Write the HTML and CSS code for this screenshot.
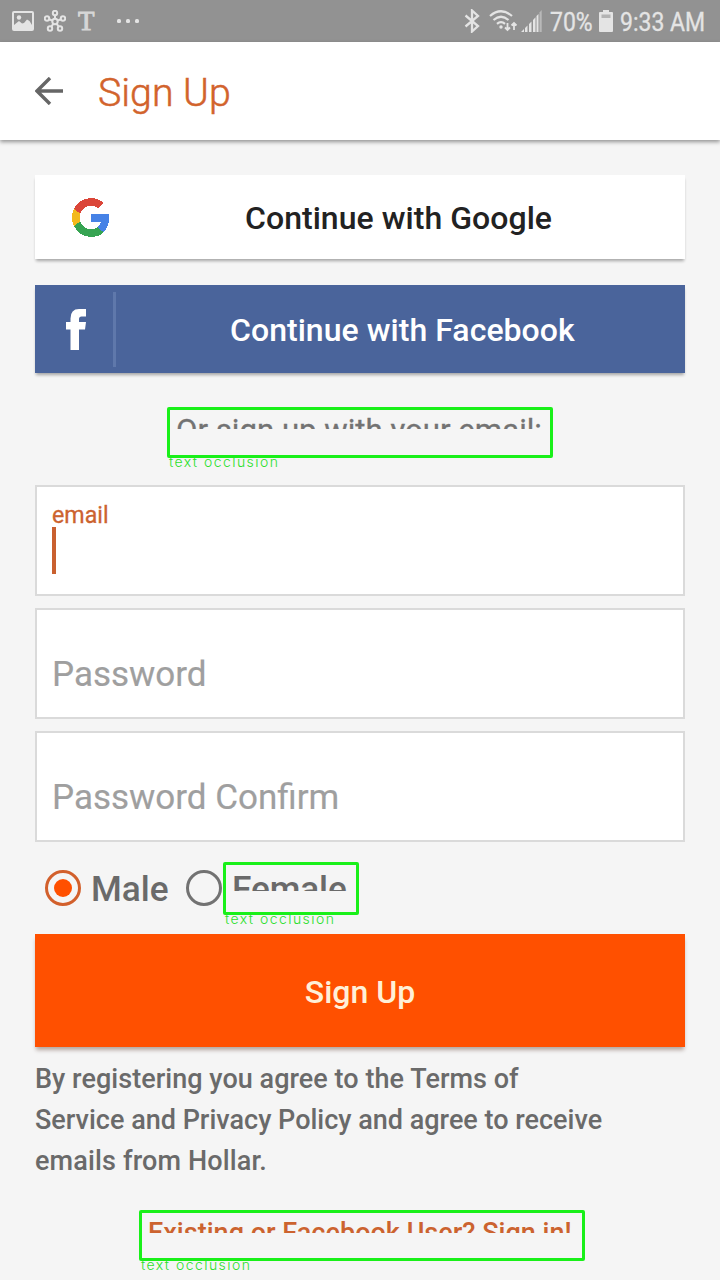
FILE: index.html
```html
<!DOCTYPE html>
<html lang="en">
<head>
<meta charset="utf-8">
<title>Sign Up</title>
<link rel="stylesheet" href="styles.css">
</head>
<body>
<div class="screen">
  <div class="status">
    <svg class="st-picture" width="22" height="20" viewBox="0 0 22 20"><rect x="1" y="1" width="20" height="18" rx="1" fill="none" stroke="#e4e4e4" stroke-width="2"/><circle cx="7" cy="6.500" r="2.200" fill="#e4e4e4"/><path d="M2 18v-4l5-4 3 2.500 2-.5 3-3.500 2.500 1.500L20 14v4z" fill="#e4e4e4"/></svg>
    <svg class="st-hub" width="22" height="22" viewBox="0 0 22 22" fill="none" stroke="#e4e4e4" stroke-width="2"><circle cx="11" cy="11.500" r="2.700"/><circle cx="11" cy="3" r="2.200"/><circle cx="3" cy="8.500" r="2.200"/><circle cx="19" cy="8.500" r="2.200"/><circle cx="6" cy="18.500" r="2.200"/><circle cx="16" cy="18.500" r="2.200"/><path d="M11 5.300v3.500M5.200 9.300l3.200 1.300M16.800 9.300l-3.200 1.300M7.300 16.600l2-2.800M14.700 16.600l-2-2.800"/></svg>
    <span class="st-t">T</span>
    <span class="st-dots"><i></i><i></i><i></i></span>
    <div class="st-right">
      <svg width="16" height="24" viewBox="0 0 16 24" fill="none" stroke="#e4e4e4" stroke-width="2.300"><path d="M1.500 6.500L14 17l-6 5.500v-21L14 7 1.500 17.500"/></svg>
      <svg class="st-wifi" width="29" height="22" viewBox="0 0 29 22" fill="none" stroke="#e4e4e4" stroke-width="2.200"><path d="M1 6q11-9.500 22 0M4.500 10q7.500-6.500 15 0M8 13.800q4-3.500 8 0"/><circle cx="12" cy="17" r="1.700" fill="#e4e4e4" stroke="none"/><path d="M18.500 13v7M16 17.500l2.500 2.500 2.500-2.500M25 20v-7M22.500 15.500l2.500-2.500 2.500 2.500" stroke-width="1.800"/></svg>
      <svg class="st-signal" width="21" height="22" viewBox="0 0 21 22" fill="#e4e4e4"><path d="M0 22l3-3v3zM4 22v-4l2.500-2.500V22zM8 22v-8l2.500-2.500V22zM12 22V10l2.500-2.700V22z"/><path d="M15.500 22V6L17.500 4v18z"/><path d="M18.500 22V2.500L20.700 0v22z" fill="#b9b9b9"/></svg>
      <span class="st-text st-pct">70%</span>
      <svg class="st-batt" width="14" height="22" viewBox="0 0 14 22"><path d="M4 0h6v2h3q1 0 1 1v18q0 1-1 1H1q-1 0-1-1V3q0-1 1-1h3z" fill="#e4e4e4"/><path d="M2.500 4.500h9V8h-9z" fill="#b3b3b3"/></svg>
      <span class="st-text st-time">9:33 AM</span>
    </div>
  </div>

  <header class="bar">
    <svg width="28" height="28" viewBox="0 0 28 28" fill="none" stroke="#666" stroke-width="3.400"><path d="M28 14H2.500M15 1L2 14l13 13"/></svg>
    <h1 class="title">Sign Up</h1>
  </header>

  <main class="content">
    <button class="btn google">
      <svg class="g-logo" width="38" height="39" viewBox="0 0 48 48" preserveAspectRatio="none" shape-rendering="crispEdges"><path fill="#db4639" d="M24 9.500c3.540 0 6.710 1.220 9.210 3.600l6.850-6.850C35.900 2.380 30.470 0 24 0 14.620 0 6.510 5.380 2.560 13.220l7.980 6.190C12.430 13.720 17.740 9.500 24 9.500z"/><path fill="#4682e6" d="M46.980 24.550c0-1.570-.15-3.090-.38-4.550H24v9.020h12.940c-.58 2.960-2.260 5.480-4.780 7.180l7.730 6c4.510-4.180 7.090-10.360 7.090-17.650z"/><path fill="#f3b91b" d="M10.530 28.590c-.48-1.450-.76-2.990-.76-4.590s.27-3.140.76-4.590l-7.980-6.190C.92 16.460 0 20.120 0 24c0 3.880.92 7.540 2.560 10.780l7.970-6.190z"/><path fill="#36a452" d="M24 48c6.480 0 11.930-2.130 15.890-5.810l-7.730-6c-2.150 1.450-4.920 2.300-8.160 2.300-6.260 0-11.570-4.220-13.470-9.910l-7.980 6.190C6.510 42.620 14.620 48 24 48z"/></svg>
      <span class="g-label">Continue with Google</span>
    </button>
    <button class="btn facebook">
      <svg class="f-logo" width="20" height="41" viewBox="0 0 20 41"><path fill="#fff" d="M4.500 41V20.500H0V13h4.500V9.500Q4.500 0 13 0h7v7.500h-4.500q-2.500 0-2.500 2.500v3h7l-1 7.500h-6V41z"/></svg>
      <span class="f-rule"></span>
      <span class="f-label">Continue with Facebook</span>
    </button>

    <div class="marked or"><span class="clip"><span>Or sign up with your email:</span></span><span class="tag">text occlusion</span></div>

    <div class="fields">
      <div class="field focused"><span class="hint">email</span><span class="caret"></span></div>
      <div class="field"><span class="placeholder">Password</span></div>
      <div class="field"><span class="placeholder">Password Confirm</span></div>
    </div>

    <div class="genders">
      <span class="radio on"></span><span class="male">Male</span>
      <span class="radio"></span>
      <div class="marked female"><span class="clip"><span>Female</span></span><span class="tag">text occlusion</span></div>
    </div>

    <button class="btn submit"><span>Sign Up</span></button>

    <p class="terms"><span class="first">By registering you agree to the Terms of</span><br>Service and Privacy Policy and agree to receive<br><span class="last">emails from Hollar.</span></p>

    <div class="marked existing"><span class="clip"><span>Existing or Facebook User? Sign in!</span></span><span class="tag">text occlusion</span></div>
  </main>
</div>
</body>
</html>
```
FILE: styles.css
```css
* { box-sizing: border-box; }
body { margin: 0; background: #f5f5f5; font-family: Roboto, "Liberation Sans", sans-serif; }
svg { display: block; flex: none; }
.screen { width: 720px; height: 1280px; overflow: hidden; background: #f5f5f5; }

.status { height: 42px; background: #929292; display: flex; align-items: center; padding-left: 12px; color: #e4e4e4; }
.st-hub { margin-left: 10px; }
.st-t { margin-left: 12px; width: 18px; font: 27px/44px "Liberation Serif", serif; color: #d6d6d6; -webkit-text-stroke: 1px #d6d6d6; }
.st-dots { display: flex; gap: 5px; margin-left: 21px; }
.st-dots i { width: 4px; height: 4px; border-radius: 1.5px; background: #e4e4e4; }
.st-right { margin-left: auto; display: flex; align-items: center; height: 42px; }
.st-wifi { margin-left: 9px; }
.st-signal { margin-left: 3px; }
.st-text { font-size: 26px; line-height: 40px; margin-top: 2px; white-space: nowrap; transform-origin: 0 50%; transform: scaleX(.885); -webkit-text-stroke: .3px #e4e4e4; }
.st-pct { margin-left: 8px; width: 43px; }
.st-batt { margin-left: 6px; }
.st-time { margin-left: 7px; width: 100px; }

.bar { height: 98px; background: #fff; display: flex; align-items: center; padding-left: 35px; box-shadow: 0 2px 4px rgba(0,0,0,.4); position: relative; }
.title { margin: 3px 0 0 35px; font-size: 39.3px; line-height: 48px; font-weight: 300; color: #d2632c; -webkit-text-stroke: .5px #d2632c; }

.content { padding: 35px 35px 0; display: flex; flex-direction: column; }
.btn { border: 0; padding: 0; margin: 0; font: 500 32px/40px Roboto, "Liberation Sans", sans-serif; display: flex; align-items: center; white-space: nowrap; box-shadow: 0 3px 3px -1px rgba(0,0,0,.33); border-radius: 0; }
.google { height: 84px; background: #fff; color: #222; }
.g-logo { margin-left: 37px; }
.g-label { margin-left: 135px; margin-top: 1px; letter-spacing: .04px; }
.facebook { height: 88px; margin-top: 26px; background: #4a649b; color: #fff; }
.f-logo { margin-left: 31px; }
.f-rule { width: 3px; height: 75px; margin-left: 27px; background: #5f78ab; }
.f-label { margin-left: 114px; margin-top: 1px; letter-spacing: .04px; }

.marked { border: 3px solid #19f019; border-radius: 2px; position: relative; z-index: 0; white-space: nowrap; }
.clip { display: block; overflow: hidden; }
.clip > span { display: block; }
.tag { position: absolute; top: 44px; left: -1px; font: 300 14px/16px Inter, sans-serif; letter-spacing: 1.45px; color: #2be02b; z-index: -1; }
.or { width: 386px; height: 51px; margin: 34px 0 0 132px; font-size: 31.2px; color: #737373; -webkit-text-stroke: .3px #737373; }
.or .clip { height: 19px; padding-left: 6px; }
.or .clip > span { line-height: 41px; }
.or .tag { -webkit-text-stroke: 0; }

.fields { margin-top: 27px; display: flex; flex-direction: column; gap: 12px; }
.field { height: 111px; border: 2px solid #dadada; background: #fff; padding-left: 15px; display: flex; flex-direction: column; }
.hint { margin-top: 13px; font-size: 23.200px; line-height: 30px; color: #cc632f; -webkit-text-stroke: .3px #cc632f; }
.caret { width: 4px; height: 47px; margin-top: -3px; background: #c9602f; }
.placeholder { margin-top: 45px; font-size: 35px; line-height: 40px; color: #9f9f9f; -webkit-text-stroke: .2px #9f9f9f; }

.genders { margin-top: 20px; height: 53px; display: flex; align-items: center; padding-left: 10px; font-size: 35.200px; font-weight: 500; color: #6a6a6a; }
.radio { width: 36px; height: 36px; margin-top: -1px; border: 3px solid #727272; border-radius: 50%; flex: none; display: grid; place-items: center; }
.radio.on { border-color: #d2602c; }
.radio.on::after { content: ""; width: 18px; height: 18px; border-radius: 50%; background: #ff5000; }
.male { width: 105px; padding-left: 10px; margin-top: 1px; }
.female { width: 136px; height: 53px; margin-left: 1px; }
.female .clip { height: 26px; padding-left: 6px; }
.female .clip > span { line-height: 48px; letter-spacing: -.1px; }
.female .tag { top: 46px; }

.submit { height: 113px; margin-top: 19px; background: #ff5000; color: #fff0d8; justify-content: center; box-shadow: 0 4px 4px -1px rgba(60,20,0,.35); }
.submit span { margin-top: 3px; }
.terms { margin: 12px 0 0; font-size: 27px; line-height: 41px; font-weight: 500; color: #6a6a6a; white-space: nowrap; }
.terms .first { letter-spacing: .04px; }
.terms .last { letter-spacing: .15px; }
.existing { width: 446px; height: 51px; margin: 28px 0 0 104px; font-size: 27px; letter-spacing: .02px; font-weight: 500; color: #cc632f; }
.existing .clip { height: 20px; padding-left: 6px; }
.existing .clip > span { line-height: 40px; }
```
